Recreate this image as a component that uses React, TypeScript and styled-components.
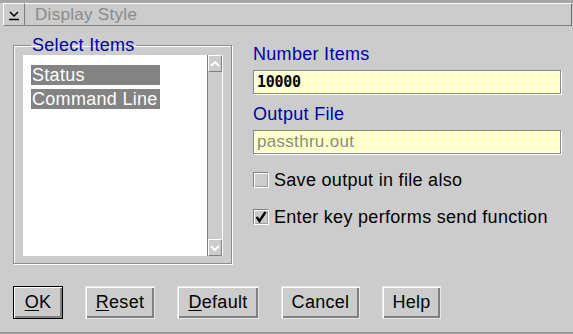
import React from "react";
import styled, { createGlobalStyle } from "styled-components";

const GlobalStyle = createGlobalStyle`
  html, body {
    margin: 0;
    padding: 0;
    background: #cccccc;
  }
  body {
    font-family: "Liberation Sans", Arial, sans-serif;
    font-size: 18px;
    letter-spacing: 0.3px;
  }
`;

/* window frame */

const Window = styled.div`
  width: 573px;
  height: 334px;
  box-sizing: border-box;
  display: flex;
  flex-direction: column;
  background: #cccccc;
  border-bottom: 2px solid #9a9a9a;
`;

const TitleRow = styled.div`
  display: flex;
  height: 23px;
  border-top: 3px solid #a6a6a6;
  padding-left: 3px;
  padding-right: 1px;
`;

const SysMenu = styled.div`
  width: 22px;
  box-sizing: border-box;
  display: flex;
  align-items: center;
  justify-content: center;
  border-top: 1px solid #ffffff;
  border-left: 1px solid #ffffff;
  border-right: 1px solid #808080;
  border-bottom: 1px solid #808080;
`;

const TitleBar = styled.div`
  flex: 1;
  display: flex;
  align-items: center;
  padding-left: 10px;
  border-top: 1px solid #ffffff;
  border-bottom: 1px solid #808080;
  border-right: 1px solid #6e6e6e;
  color: #8a8a8a;
  font-size: 17px;
`;

/* body */

const Body = styled.div`
  display: flex;
  padding: 10px 0 0 13px;
  gap: 21px;
`;

const Group = styled.fieldset`
  margin: 0;
  width: 219px;
  height: 228px;
  box-sizing: border-box;
  padding: 1px 8px 7px 9px;
  border: 1px solid #8c8c8c;
  box-shadow: inset 1px 1px 0 #ffffff, 1px 1px 0 #ffffff;
  display: flex;
`;

const Legend = styled.legend`
  color: #0000aa;
  padding: 0 1px;
  margin-left: 8px;
  line-height: 18px;
`;

const ListBox = styled.div`
  flex: 1;
  display: flex;
  background: #ffffff;
`;

const Items = styled.div`
  flex: 1;
  padding: 10px 0 0 8px;
  display: flex;
  flex-direction: column;
  gap: 4px;
`;

const Item = styled.div`
  width: 128px;
  height: 20px;
  line-height: 20px;
  background: #838383;
  color: #ffffff;
  padding-left: 1px;
  white-space: nowrap;
`;

const ScrollBar = styled.div`
  width: 16px;
  box-sizing: border-box;
  display: flex;
  flex-direction: column;
  justify-content: space-between;
  background: #cccccc;
  border-left: 1px solid #808080;
  border-right: 1px solid #ffffff;
`;

const ScrollButton = styled.div`
  height: 17px;
  box-sizing: border-box;
  display: flex;
  align-items: center;
  justify-content: center;
  border-top: 1px solid #ffffff;
  border-left: 1px solid #ffffff;
  border-bottom: 1px solid #808080;
  border-right: 1px solid #808080;
`;

const RightCol = styled.div`
  width: 308px;
  display: flex;
  flex-direction: column;
`;

const Label = styled.div<{ $top: number }>`
  color: #0000aa;
  line-height: 20px;
  margin-top: ${(p) => p.$top}px;
`;

const Field = styled.div<{ $muted?: boolean }>`
  height: 24px;
  margin-top: 6px;
  box-sizing: border-box;
  border: 1px solid #8a8a8a;
  box-shadow: 1px 1px 0 #ffffff;
  background: repeating-conic-gradient(#ffffc4 0 25%, #fffff4 0 50%) 0 0 / 2px 2px;
  padding-left: 3px;
  line-height: 22px;
  color: ${(p) => (p.$muted ? "#8a8a8a" : "#000000")};
  font-family: ${(p) => (p.$muted ? "\"Liberation Sans\", Arial, sans-serif" : "\"DejaVu Sans Mono\", monospace")};
  font-size: ${(p) => (p.$muted ? "17px" : "15px")};
  font-weight: ${(p) => (p.$muted ? "normal" : "bold")};
  letter-spacing: ${(p) => (p.$muted ? "0.3px" : "-0.3px")};
`;

const CheckRow = styled.div<{ $top: number }>`
  display: flex;
  align-items: center;
  gap: 5px;
  margin-top: ${(p) => p.$top}px;
  height: 18px;
  color: #000000;
`;

const Box = styled.div`
  width: 16px;
  height: 16px;
  box-sizing: border-box;
  border-top: 1px solid #808080;
  border-left: 1px solid #808080;
  border-bottom: 1px solid #ffffff;
  border-right: 1px solid #ffffff;
  box-shadow: inset 1px 1px 0 #ffffff, inset -1px -1px 0 #a0a0a0;
  display: flex;
  align-items: center;
  justify-content: center;
`;

/* buttons */

const ButtonRow = styled.div`
  display: flex;
  gap: 22px;
  padding-left: 13px;
  margin-top: auto;
  margin-bottom: 13px;
`;

const Button = styled.div<{ $w: number; $default?: boolean }>`
  width: ${(p) => p.$w}px;
  height: 33px;
  box-sizing: border-box;
  display: flex;
  align-items: center;
  justify-content: center;
  color: #000000;
  border: 1px solid ${(p) => (p.$default ? "#000000" : "#e8e8e8")};
  box-shadow: inset 1px 1px 0 #ffffff, inset -2px -2px 0 #808080;
  background: #cccccc;

  u {
    text-decoration: underline;
    text-underline-offset: 2px;
  }
`;

const ChevronDown = () => (
  <svg width="14" height="12" viewBox="0 0 14 12">
    <path d="M3 3 L7 7 L11 3" fill="none" stroke="#000" strokeWidth="1.5" />
    <path d="M2 10.5 H12" stroke="#000" strokeWidth="1.5" />
  </svg>
);

const Arrow = ({ up }: { up?: boolean }) => (
  <svg width="10" height="6" viewBox="0 0 10 6">
    <path
      d={up ? "M1 5 L5 1 L9 5" : "M1 1 L5 5 L9 1"}
      fill="none"
      stroke="#ffffff"
      strokeWidth="2"
    />
  </svg>
);

const Check = () => (
  <svg width="12" height="12" viewBox="0 0 12 12">
    <path d="M1.5 6 L4.5 10 L10.5 1" fill="none" stroke="#000" strokeWidth="2.4" />
  </svg>
);

const App: React.FC = () => {
  return (
    <>
      <GlobalStyle />
      <Window>
        <TitleRow>
          <SysMenu>
            <ChevronDown />
          </SysMenu>
          <TitleBar>Display Style</TitleBar>
        </TitleRow>

        <Body>
          <Group>
            <Legend>Select Items</Legend>
            <ListBox>
              <Items>
                <Item>Status</Item>
                <Item>Command Line</Item>
              </Items>
              <ScrollBar>
                <ScrollButton>
                  <Arrow up />
                </ScrollButton>
                <ScrollButton>
                  <Arrow />
                </ScrollButton>
              </ScrollBar>
            </ListBox>
          </Group>

          <RightCol>
            <Label $top={8}>Number Items</Label>
            <Field>10000</Field>
            <Label $top={10}>Output File</Label>
            <Field $muted>passthru.out</Field>
            <CheckRow $top={17}>
              <Box />
              Save output in file also
            </CheckRow>
            <CheckRow $top={19}>
              <Box>
                <Check />
              </Box>
              Enter key performs send function
            </CheckRow>
          </RightCol>
        </Body>

        <ButtonRow>
          <Button $w={50} $default>
            <u>O</u>K
          </Button>
          <Button $w={70}>
            <u>R</u>eset
          </Button>
          <Button $w={82}>
            <u>D</u>efault
          </Button>
          <Button $w={79}>Cancel</Button>
          <Button $w={59}>Help</Button>
        </ButtonRow>
      </Window>
    </>
  );
};

export default App;
